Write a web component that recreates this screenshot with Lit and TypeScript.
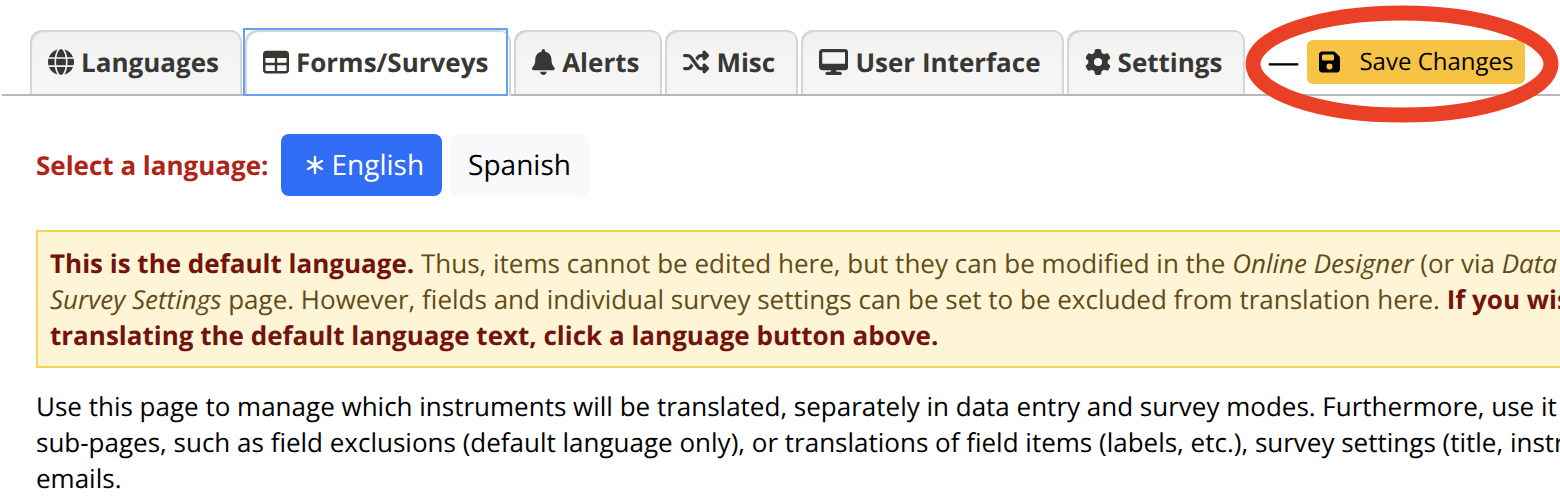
import { LitElement, html, svg, css } from "lit";
import { customElement, property, state } from "lit/decorators.js";
import { classMap } from "lit/directives/class-map.js";

const ICONS: Record<string, { w: number; d: string }> = {
  globe: {
    w: 512,
    d: "M352 256c0 22.2-1.2 43.6-3.3 64H163.3c-2.2-20.4-3.3-41.8-3.3-64s1.2-43.6 3.3-64H348.7c2.2 20.4 3.3 41.8 3.3 64zm28.8-64H503.9c5.3 20.5 8.1 41.9 8.1 64s-2.8 43.5-8.1 64H380.8c2.1-20.6 3.2-42 3.2-64s-1.1-43.4-3.2-64zm112.6-32H376.7c-10-63.9-29.8-117.4-55.3-151.6c78.3 20.7 142 77.5 171.9 151.6zm-149.1 0H167.7c6.1-36.4 15.5-68.6 27-94.7c10.5-23.6 22.2-40.7 33.5-51.5C239.4 3.2 248.7 0 256 0s16.6 3.2 27.8 13.8c11.3 10.8 23 27.9 33.5 51.5c11.6 26 20.9 58.2 27 94.7zm-209 0H18.6C48.6 85.9 112.2 29.1 190.6 8.4C165.1 42.6 145.3 96.1 135.3 160zM8.1 192H131.2c-2.1 20.6-3.2 42-3.2 64s1.1 43.4 3.2 64H8.1C2.8 299.5 0 278.1 0 256s2.8-43.5 8.1-64zM194.7 446.6c-11.6-26-20.9-58.2-27-94.6H344.3c-6.1 36.4-15.5 68.6-27 94.6c-10.5 23.6-22.2 40.7-33.5 51.5C272.6 508.8 263.3 512 256 512s-16.6-3.2-27.8-13.8c-11.3-10.8-23-27.9-33.5-51.5zM135.3 352c10 63.9 29.8 117.4 55.3 151.6C112.2 482.9 48.6 426.1 18.6 352H135.3zm358.1 0c-30 74.1-93.6 130.9-171.9 151.6c25.5-34.2 45.2-87.7 55.3-151.6H493.4z",
  },
  table: {
    w: 512,
    d: "M48 272V176H232v96H48zm0 48H232v112H64c-8.800 0-16-7.200-16-16V320zm232 112V320H464v96c0 8.800-7.200 16-16 16H280zM464 272H280V176H464v96zM64 32C28.700 32 0 60.700 0 96V416c0 35.300 28.700 64 64 64H448c35.300 0 64-28.700 64-64V96c0-35.300-28.700-64-64-64H64z",
  },
  bell: {
    w: 448,
    d: "M224 0c-17.7 0-32 14.3-32 32V51.2C119 66 64 130.6 64 208v18.8c0 47-17.3 92.4-48.5 127.6l-7.4 8.3c-8.4 9.4-10.4 22.9-5.3 34.4S19.4 416 32 416H416c12.6 0 24-7.4 29.2-18.9s3.1-25-5.3-34.4l-7.4-8.3C401.3 319.2 384 273.9 384 226.8V208c0-77.4-55-142-128-156.8V32c0-17.7-14.3-32-32-32zm45.3 493.3c12-12 18.7-28.3 18.7-45.3H224 160c0 17 6.7 33.3 18.7 45.3s28.3 18.7 45.3 18.7s33.3-6.7 45.3-18.7z",
  },
  shuffle: {
    w: 512,
    d: "M403.8 34.4c12-5 25.7-2.2 34.9 6.9l64 64c6 6 9.4 14.1 9.4 22.6s-3.4 16.6-9.4 22.6l-64 64c-9.2 9.2-22.9 11.9-34.9 6.9s-19.8-16.6-19.8-29.6V160H352c-10.1 0-19.6 4.7-25.6 12.8L284 229.3 244 176l31.2-41.6C293.3 110.2 321.8 96 352 96h32V64c0-12.9 7.8-24.6 19.8-29.6zM164 282.7L204 336l-31.2 41.6C154.7 401.8 126.2 416 96 416H32c-17.7 0-32-14.3-32-32s14.3-32 32-32H96c10.1 0 19.6-4.7 25.6-12.8L164 282.7zm274.6 188c-9.2 9.2-22.9 11.9-34.9 6.9s-19.8-16.6-19.8-29.6V416H352c-30.2 0-58.7-14.2-76.8-38.4L121.6 172.8c-6-8.1-15.5-12.8-25.6-12.8H32c-17.7 0-32-14.3-32-32s14.3-32 32-32H96c30.2 0 58.7 14.2 76.8 38.4L326.4 339.2c6 8.1 15.5 12.8 25.6 12.8h32V320c0-12.9 7.8-24.6 19.8-29.6s25.7-2.2 34.9 6.9l64 64c6 6 9.4 14.1 9.4 22.6s-3.4 16.6-9.4 22.6l-64 64z",
  },
  desktop: {
    w: 576,
    d: "M64 0C28.7 0 0 28.7 0 64V352c0 35.3 28.7 64 64 64H240l-10.700 32H160c-17.700 0-32 14.300-32 32s14.300 32 32 32H416c17.700 0 32-14.300 32-32s-14.300-32-32-32H346.700L336 416H512c35.300 0 64-28.700 64-64V64c0-35.300-28.700-64-64-64H64zM512 64V288H64V64H512z",
  },
  gear: {
    w: 512,
    d: "M495.9 166.6c3.2 8.7 .5 18.4-6.4 24.6l-43.3 39.4c1.1 8.3 1.7 16.8 1.7 25.4s-.6 17.1-1.7 25.4l43.3 39.4c6.9 6.2 9.6 15.9 6.4 24.6c-4.4 11.9-9.7 23.3-15.8 34.3l-4.7 8.1c-6.6 11-14 21.4-22.1 31.2c-5.9 7.2-15.7 9.6-24.5 6.8l-55.7-17.7c-13.4 10.3-28.2 18.9-44 25.4l-12.5 57.1c-2 9.1-9 16.3-18.2 17.8c-13.8 2.3-28 3.5-42.5 3.5s-28.7-1.2-42.5-3.5c-9.2-1.5-16.2-8.7-18.2-17.8l-12.5-57.1c-15.8-6.5-30.6-15.1-44-25.4L83.1 425.9c-8.8 2.8-18.6 .3-24.5-6.8c-8.1-9.8-15.5-20.2-22.1-31.2l-4.7-8.1c-6.1-11-11.4-22.4-15.8-34.3c-3.2-8.7-.5-18.4 6.4-24.6l43.3-39.4C64.6 273.1 64 264.6 64 256s.6-17.1 1.7-25.4L22.4 191.2c-6.9-6.2-9.6-15.9-6.4-24.6c4.4-11.9 9.7-23.3 15.8-34.3l4.7-8.1c6.6-11 14-21.4 22.1-31.2c5.9-7.2 15.7-9.6 24.5-6.8l55.7 17.7c13.4-10.3 28.2-18.9 44-25.4l12.5-57.1c2-9.1 9-16.3 18.2-17.8C227.3 1.2 241.5 0 256 0s28.7 1.2 42.5 3.5c9.2 1.5 16.2 8.7 18.2 17.8l12.5 57.1c15.8 6.5 30.6 15.1 44 25.4l55.7-17.7c8.8-2.8 18.6-.3 24.5 6.8c8.1 9.8 15.5 20.2 22.1 31.2l4.7 8.1c6.1 11 11.4 22.4 15.8 34.3zM256 336a80 80 0 1 0 0-160 80 80 0 1 0 0 160z",
  },
  floppy: {
    w: 448,
    d: "M64 32C28.7 32 0 60.7 0 96V416c0 35.3 28.7 64 64 64H384c35.3 0 64-28.7 64-64V173.3c0-17-6.7-33.3-18.7-45.3L352 50.7C340 38.7 323.7 32 306.7 32H64zm0 96c0-17.7 14.3-32 32-32H288c17.7 0 32 14.3 32 32v64c0 17.7-14.3 32-32 32H96c-17.7 0-32-14.3-32-32V128zM224 288a64 64 0 1 1 0 128 64 64 0 1 1 0-128z",
  },
};

@customElement("ui-icon")
export class UiIcon extends LitElement {
  @property() name = "globe";

  static styles = css`
    :host {
      display: inline-flex;
      flex: none;
      height: 1em;
    }
    svg {
      display: block;
      height: 100%;
      fill: currentColor;
    }
  `;

  render() {
    const icon = ICONS[this.name];
    return html`<svg viewBox="0 0 ${icon.w} 512" aria-hidden="true">
      ${svg`<path fill-rule="evenodd" d=${icon.d}></path>`}
    </svg>`;
  }
}

const TABS = [
  { icon: "globe", label: "Languages" },
  { icon: "table", label: "Forms/Surveys" },
  { icon: "bell", label: "Alerts" },
  { icon: "shuffle", label: "Misc" },
  { icon: "desktop", label: "User Interface" },
  { icon: "gear", label: "Settings" },
];

@customElement("app-root")
export class AppRoot extends LitElement {
  @state() private tab = "Forms/Surveys";
  @state() private language = "English";

  static styles = css`
    :host {
      display: block;
      overflow: hidden;
      background: #fff;
      color: #000;
      font: 26px/36px "Open Sans", sans-serif;
      text-rendering: geometricPrecision;
    }
    * {
      box-sizing: border-box;
    }
    button {
      border: 0;
      margin: 0;
      font: inherit;
      text-rendering: inherit;
      white-space: nowrap;
      cursor: pointer;
    }
    .bar {
      display: flex;
      margin-left: 2px;
      padding: 30px 0 0 28px;
      border-bottom: 2px solid #b8b8b8;
    }
    .tabs {
      display: flex;
      gap: 3px;
    }
    .tab {
      display: flex;
      align-items: center;
      gap: 7px;
      height: 64px;
      padding: 0 23px 0 18px;
      border-radius: 12px 12px 0 0;
      background: linear-gradient(#f1f1ef, #f5f5f5 50%);
      box-shadow: inset 2px 2px 1px #d4d4d3, inset -2px 0 1px #d4d4d3;
      color: #393733;
      font-weight: 700;
    }
    .tab.active {
      position: relative;
      height: 66px;
      margin-bottom: -2px;
      padding-bottom: 2px;
      background: #fff;
    }
    .tab.active::after {
      content: "";
      position: absolute;
      inset: -2px 3px 0 -2px;
      border: 2px solid #66a0f6;
    }
    .save-area {
      position: relative;
      display: flex;
      align-items: center;
      gap: 8px;
      padding-left: 22px;
    }
    .dash {
      font-size: 32px;
    }
    .save {
      display: flex;
      align-items: center;
      gap: 19px;
      height: 44px;
      padding: 0 12px;
      border-radius: 6px;
      background: #f6c344;
      color: #000;
      font-size: 24px;
    }
    .ring {
      position: absolute;
      left: 0;
      top: -25px;
      width: 314px;
      height: 118px;
      fill: none;
      stroke: #ea4025;
      stroke-width: 15;
      pointer-events: none;
    }
    .languages {
      display: flex;
      align-items: center;
      padding: 38px 36px 34px;
    }
    .prompt {
      margin-right: 12px;
      color: #b02318;
      font-weight: 700;
    }
    .language {
      display: flex;
      align-items: center;
      gap: 8px;
      height: 62px;
      margin-right: 8px;
      padding: 0 18px;
      border-radius: 8px;
      background: #f8f9fb;
      color: #000;
      font-size: 28px;
    }
    .language.active {
      padding-left: 25px;
      background: #316cf4;
      color: #fff;
    }
    .star {
      width: 18px;
      height: 20px;
      fill: none;
      stroke: currentColor;
      stroke-width: 2.4;
      stroke-linecap: round;
    }
    .notice {
      margin-left: 36px;
      padding: 13px 0 13px 12px;
      border: 2px solid #f2d64f;
      border-right: 0;
      background: #fdf5d5;
      color: #634a17;
      white-space: nowrap;
      overflow: hidden;
    }
    .notice strong {
      color: #74130d;
    }
    .intro {
      margin: 20px 0 0 36px;
      white-space: nowrap;
    }
  `;

  render() {
    return html`
      <header class="bar">
        <nav class="tabs">
          ${TABS.map(
            (t) => html`<button
              class=${classMap({ tab: true, active: t.label === this.tab })}
              @click=${() => (this.tab = t.label)}
            ><ui-icon name=${t.icon}></ui-icon><span>${t.label}</span></button>`
          )}
        </nav>
        <div class="save-area">
          <span class="dash">—</span>
          <button class="save"><ui-icon name="floppy"></ui-icon><span>Save Changes</span></button>
          <svg class="ring" viewBox="0 0 314 118" aria-hidden="true">
            <ellipse cx="157" cy="59" rx="149" ry="51"></ellipse>
          </svg>
        </div>
      </header>
      <main>
        <div class="languages" role="group" aria-labelledby="prompt">
          <span class="prompt" id="prompt">Select a language:</span>
          ${["English", "Spanish"].map(
            (name, i) => html`<button
              class=${classMap({ language: true, active: name === this.language })}
              @click=${() => (this.language = name)}
            >${i === 0
                ? html`<svg class="star" viewBox="0 0 18 20" aria-hidden="true">
                    <path d="M9 2v16M2 6l14 8M16 6l-14 8"></path>
                  </svg>`
                : null}<span>${name}</span></button>`
          )}
        </div>
        <div class="notice">
          <strong>This is the default language.</strong> Thus, items cannot be edited here, but they can be modified in the <em>Online Designer</em> (or via <em>Data</em><br />
          <em>Survey Settings</em> page. However, fields and individual survey settings can be set to be excluded from translation here. <strong>If you wish</strong><br />
          <strong>translating the default language text, click a language button above.</strong>
        </div>
        <p class="intro">
          Use this page to manage which instruments will be translated, separately in data entry and survey modes. Furthermore, use it<br />
          sub-pages, such as field exclusions (default language only), or translations of field items (labels, etc.), survey settings (title, instr<br />
          emails.
        </p>
      </main>
    `;
  }
}
